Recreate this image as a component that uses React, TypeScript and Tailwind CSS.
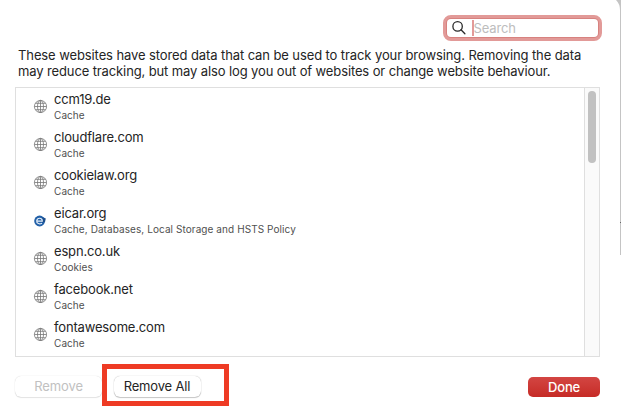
type Site = { name: string; kinds: string; icon?: "eicar" };

const sites: Site[] = [
  { name: "ccm19.de", kinds: "Cache" },
  { name: "cloudflare.com", kinds: "Cache" },
  { name: "cookielaw.org", kinds: "Cache" },
  { name: "eicar.org", kinds: "Cache, Databases, Local Storage and HSTS Policy", icon: "eicar" },
  { name: "espn.co.uk", kinds: "Cookies" },
  { name: "facebook.net", kinds: "Cache" },
  { name: "fontawesome.com", kinds: "Cache" },
];

function GlobeIcon() {
  return (
    <svg width="14" height="14" viewBox="0 0 14 14" fill="none" stroke="#757575" strokeWidth="0.8">
      <circle cx="7.5" cy="7.5" r="6.1" />
      <ellipse cx="7.5" cy="7.5" rx="3" ry="6.1" />
      <path d="M7.5 1.4v12.2M1.4 7.5h12.2M2.5 4.3h10M2.5 10.7h10" />
    </svg>
  );
}

function EicarIcon() {
  return (
    <svg width="14" height="14" viewBox="0 0 14 14" fill="none">
      <circle cx="6.6" cy="8" r="5.4" fill="#2260a8" />
      <path d="M9.5 4.2 12.8 5.4 12 8.9 9 9.4Z" fill="#1c4e8c" />
      <path d="M3.8 8.1h5.5C9.4 4.3 4.2 4.4 3.7 7.8c-.3 3 3 3.6 5.3 2.4" stroke="#e5eef8" strokeWidth="1.15" />
    </svg>
  );
}

function SearchField() {
  return (
    <div className="flex h-[26px] w-[159px] items-center rounded-[8px] border-[3px] border-[#e29a98] bg-[#d7827f] p-px">
      <div className="flex h-full w-full items-center rounded-[4px] bg-white pl-[5px]">
        <svg width="14" height="14" viewBox="0 0 14 14" fill="none" stroke="#292929" strokeWidth="1.3" strokeLinecap="round">
          <circle cx="5.6" cy="5.4" r="4.7" />
          <path d="m9 8.8 3.9 3.9" />
        </svg>
        <span className="ml-[6px] h-[16px] w-[2px] bg-[#e39a98]" />
        <span className="-ml-[0.5px] text-[13px] leading-4 tracking-[-0.15px] text-[#bdbdbd]">Search</span>
      </div>
    </div>
  );
}

export default function App() {
  return (
    <div className="h-[416px] w-[621px] overflow-hidden bg-white font-['Inter','Liberation_Sans',sans-serif] text-[13px] text-[#242424]">
      <div className="relative flex h-full flex-col pl-[15px] pr-[21px] pt-[15px]">
        <svg className="absolute right-0 top-0" width="12" height="255" viewBox="0 0 12 255">
          <path d="M7 0q4 4 4 10v245h1V0Z" fill="#c4c4c4" />
          <path d="M11 222.5h1" stroke="#666" />
        </svg>
        <div className="-mr-[2px] flex justify-end">
          <SearchField />
        </div>
        <div className="mt-[6px] whitespace-nowrap pl-[3px] leading-4">
          <p className="tracking-[-0.1px]">These websites have stored data that can be used to track your browsing. Removing the data</p>
          <p className="tracking-[-0.12px]">may reduce tracking, but may also log you out of websites or change website behaviour.</p>
        </div>
        <div className="mt-[8px] flex h-[270px] shrink-0 border border-[#dfdfdf]">
          <ul className="flex-1 pl-[17px] pt-[3px]">
            {sites.map((site) => (
              <li key={site.name} className="flex h-[38px] gap-[7px]">
                <span className="mt-[8px] h-[14px] w-[14px]">{site.icon ? <EicarIcon /> : <GlobeIcon />}</span>
                <div>
                  <div className="h-[17px] leading-[17px] tracking-[-0.17px]">{site.name}</div>
                  <div className="text-[10px] leading-[14px] tracking-[0.08px] text-[#505050]">{site.kinds}</div>
                </div>
              </li>
            ))}
          </ul>
          <div className="flex w-[15px] justify-center border-l border-[#dfdfdf] bg-[#fafafa] pt-[3px]">
            <div className="h-[72px] w-[8px] rounded-full bg-[#c1c1c1]" />
          </div>
        </div>
        <div className="mt-[7px] flex h-[42px]">
          <button className="mt-[12px] h-[21px] w-[87px] rounded-[6px] bg-white leading-[21px] tracking-[-0.1px] text-[#c1c1c1] shadow-[0_0_1px_#0003,0_1px_1px_#00000018]">Remove</button>
          <div className="h-[42px] w-[127px] border-[5px] border-[#ee3b24] pl-[6.5px] pt-[7px]">
            <button className="block h-[21px] w-[87px] rounded-[6px] bg-white leading-[21px] tracking-[-0.15px] shadow-[0_0_1px_#0005,0_1px_1px_#0003]">Remove All</button>
          </div>
          <button className="ml-auto mt-[13px] h-[20px] w-[72px] rounded-[5px] bg-linear-to-b from-[#d34542] to-[#c62b26] font-medium leading-[19px] tracking-[-0.2px] text-white">Done</button>
        </div>
      </div>
    </div>
  );
}
